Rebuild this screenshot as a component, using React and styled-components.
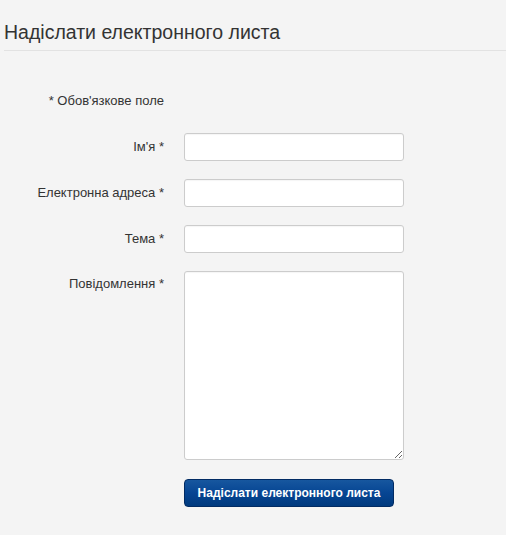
import React from 'react';
import styled, { createGlobalStyle } from 'styled-components';

const GlobalStyle = createGlobalStyle`
  html, body {
    margin: 0;
    padding: 0;
    background: #f4f4f4;
    font-family: 'Liberation Sans', Arial, sans-serif;
    color: #333;
  }
`;

const Page = styled.div`
  padding: 0 0 0 4px;
  min-height: 535px;
  box-sizing: border-box;
`;

const Heading = styled.h2`
  margin: 0;
  padding: 21px 0 7px;
  font-size: 19.5px;
  font-weight: normal;
  line-height: 22px;
  color: #333;
  border-bottom: 1px solid #e2e2e2;
`;

const Form = styled.form`
  display: grid;
  grid-template-columns: 160px 220px;
  column-gap: 20px;
  row-gap: 18px;
  padding-top: 40px;
  align-items: start;
`;

const Note = styled.div`
  grid-column: 1;
  text-align: right;
  font-size: 13px;
  line-height: 18px;
  margin-top: 1px;
  margin-bottom: 5px;
`;

const Label = styled.label`
  grid-column: 1;
  text-align: right;
  font-size: 13px;
  line-height: 15px;
  padding-top: ${p => (p.$top ? '5px' : '6px')};
`;

const field = `
  box-sizing: border-box;
  width: 220px;
  border: 1px solid #ccc;
  border-radius: 3px;
  background: #fff;
  box-shadow: inset 0 1px 1px rgba(0, 0, 0, 0.04);
  font-family: 'Liberation Sans', Arial, sans-serif;
  font-size: 12px;
  margin: 0;
  grid-column: 2;
`;

const Input = styled.input`
  ${field}
  height: 28px;
  padding: 4px 6px;
`;

const TextArea = styled.textarea`
  ${field}
  height: 189px;
  padding: 4px 6px;
  resize: both;
  display: block;
`;

const Button = styled.button`
  grid-column: 2;
  margin-top: 1px;
  width: 210px;
  height: 28px;
  border: 1px solid #012b63;
  border-radius: 4px;
  background: linear-gradient(to bottom, #17579f 0%, #064593 50%, #003a7e 100%);
  color: #fff;
  font-family: 'Liberation Sans', Arial, sans-serif;
  font-size: 12px;
  font-weight: bold;
  cursor: pointer;
  padding: 0;
`;

export default function App() {
  return (
    <Page>
      <GlobalStyle />
      <Heading>Надіслати електронного листа</Heading>
      <Form onSubmit={e => e.preventDefault()}>
        <Note>* Обов'язкове поле</Note>
        <Label htmlFor="name">Ім'я *</Label>
        <Input id="name" type="text" />
        <Label htmlFor="email">Електронна адреса *</Label>
        <Input id="email" type="email" />
        <Label htmlFor="subject">Тема *</Label>
        <Input id="subject" type="text" />
        <Label htmlFor="message" $top>Повідомлення *</Label>
        <TextArea id="message" />
        <Button type="submit">Надіслати електронного листа</Button>
      </Form>
    </Page>
  );
}
